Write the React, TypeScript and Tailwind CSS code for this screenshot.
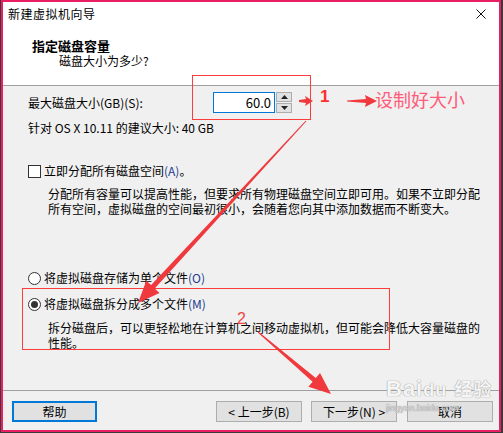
const font = { fontFamily: '"Noto Sans CJK SC", "Noto Sans", sans-serif' }

function Arrow({ pts }: { pts: string }) {
  return <polygon points={pts} fill="#f0393d" />
}

export default function App() {
  return (
    <div className="relative w-[503px] h-[433px] bg-[#3a3a3a] overflow-hidden text-black text-[12px]" style={font}>
      {/* dialog window */}
      <div className="ml-[1px] w-[500px] h-[432px] border-2 border-[#e91e63] flex flex-col bg-[#f0f0f0]">
        {/* header */}
        <div className="h-[84px] bg-white border-b border-[#a0a0a0] shrink-0">
          <div className="h-[24px] flex items-center justify-between pl-[5px] pr-[13px]">
            <span className="text-[12px] tracking-[0.5px] leading-none">新建虚拟机向导</span>
            <svg width="10" height="10" viewBox="0 0 10 10" className="mt-[-1px]">
              <path d="M0.5 0.5 L9.5 9.5 M9.5 0.5 L0.5 9.5" stroke="#111" strokeWidth="1" />
            </svg>
          </div>
          <div className="mt-[11px] pl-[29px] h-[16px] flex items-center font-bold text-[13px] leading-none">指定磁盘容量</div>
          <div className="pl-[56px] h-[16px] flex items-center leading-none">磁盘大小为多少?</div>
        </div>

        {/* body */}
        <div className="flex-1 pl-[25px]">
          <div className="mt-[6px] h-[21px] flex items-center">
            <span className="w-[185px] leading-none">最大磁盘大小(GB)(S):</span>
            <div className="w-[62px] h-[21px] bg-white border border-[#0078d7] flex items-center justify-end pr-[3px] leading-none text-[13px]">60.0</div>
            <div className="ml-[1px] flex flex-col gap-[1px]">
              <div className="w-[16px] h-[10px] bg-[#e1e1e1] border border-[#adadad] flex items-center justify-center">
                <svg width="7" height="4" viewBox="0 0 7 4"><path d="M0 4 L3.5 0 L7 4 Z" fill="#222" /></svg>
              </div>
              <div className="w-[16px] h-[10px] bg-[#e1e1e1] border border-[#adadad] flex items-center justify-center">
                <svg width="7" height="4" viewBox="0 0 7 4"><path d="M0 0 L3.5 4 L7 0 Z" fill="#222" /></svg>
              </div>
            </div>
          </div>
          <div className="mt-[7px] h-[16px] flex items-center leading-none">针对 OS X 10.11 的建议大小: 40 GB</div>

          <div className="mt-[27px] h-[16px] flex items-center gap-[3px] leading-none">
            <div className="w-[13px] h-[13px] bg-white border border-[#333]" />
            <span>立即分配所有磁盘空间<span className="text-[#1d3c8f]">(A)</span>。</span>
          </div>
          <div className="mt-[7px] pl-[20px] leading-[15px] whitespace-nowrap">
            <div>分配所有容量可以提高性能，但要求所有物理磁盘空间立即可用。如果不立即分配</div>
            <div>所有空间，虚拟磁盘的空间最初很小，会随着您向其中添加数据而不断变大。</div>
          </div>

          <div className="mt-[54px] h-[16px] flex items-center gap-[3px] leading-none">
            <div className="w-[13px] h-[13px] rounded-full bg-white border border-[#333]" />
            <span>将虚拟磁盘存储为单个文件<span className="text-[#1d3c8f]">(O)</span></span>
          </div>
          <div className="mt-[10px] h-[16px] flex items-center gap-[3px] leading-none">
            <div className="w-[13px] h-[13px] rounded-full bg-white border border-[#333] flex items-center justify-center">
              <div className="w-[7px] h-[7px] rounded-full bg-[#333]" />
            </div>
            <span>将虚拟磁盘拆分成多个文件<span className="text-[#1d3c8f]">(M)</span></span>
          </div>
          <div className="mt-[8px] pl-[20px] leading-[15px] whitespace-nowrap">
            <div>拆分磁盘后，可以更轻松地在计算机之间移动虚拟机，但可能会降低大容量磁盘的</div>
            <div>性能。</div>
          </div>
        </div>

        {/* footer */}
        <div className="h-[40px] shrink-0 border-t border-[#a0a0a0] pt-[10px] pl-[9px] flex items-start">
          <div className="w-[85px] h-[21px] bg-[#e1e1e1] border-2 border-[#0078d7] flex items-center justify-center leading-none">帮助</div>
          <div className="ml-[119px] w-[86px] h-[21px] bg-[#e1e1e1] border border-[#adadad] flex items-center justify-center leading-none">&lt; 上一步(B)</div>
          <div className="ml-[9px] w-[86px] h-[21px] bg-[#e1e1e1] border border-[#adadad] flex items-center justify-center leading-none">下一步(N) &gt;</div>
          <div className="ml-[10px] w-[86px] h-[21px] bg-[#e1e1e1] border border-[#adadad] flex items-center justify-center leading-none">取消</div>
        </div>
      </div>

      {/* watermark */}
      <div className="absolute left-[386px] top-[378px] text-white/90 leading-none pointer-events-none" style={{ fontFamily: '"Liberation Sans", "Noto Sans CJK SC", sans-serif', textShadow: '0 0 1px #9a9a9a, 0 0 1px #9a9a9a' }}>
        <div className="text-[22px] font-bold tracking-[1px]">Bai<span className="text-[18px]">du</span> <span className="text-[18px]">经验</span></div>
        <div className="mt-[4px] text-[9px] text-[#dcdcdc]">jingyan.baidu.com</div>
      </div>

      {/* annotations */}
      <svg className="absolute left-0 top-0 pointer-events-none" width="503" height="433" viewBox="0 0 503 433">
        <rect x="192.5" y="75.5" width="118" height="44" fill="none" stroke="#ff3b3b" strokeWidth="1" />
        <rect x="22.5" y="288.5" width="367" height="61" fill="none" stroke="#ff3b3b" strokeWidth="1" />
        {/* arrow to radio option */}
        <Arrow pts="306.4,121.3 305.6,120.7 151.1,285.1 146.3,280.7 138,303 159.5,292.9 154.7,288.5" />
        {/* arrow to next button */}
        <Arrow pts="257.7,332.4 258.3,331.6 315.8,377.9 320,372.9 331,394 308.4,386.7 312.6,381.7" />
        {/* small arrows near label 1 */}
        <Arrow pts="299,100 306,99 305,96 313,101 305,106 306,103 299,102" />
        <Arrow pts="347,100.5 366,99 365,95 377,101 365,107 366,103 347,101.5" />
      </svg>
      <div className="absolute left-[320px] top-[88px] text-[17px] font-bold text-[#ff2d2d] leading-none" style={{ fontFamily: '"Liberation Sans", sans-serif' }}>1</div>
      <div className="absolute left-[375px] top-[90px] text-[18px] text-[#ff5a78] leading-none">设制好大小</div>
      <div className="absolute left-[237px] top-[311px] text-[16px] text-[#f04545] leading-none" style={{ fontFamily: '"Liberation Sans", sans-serif' }}>2</div>
    </div>
  )
}
